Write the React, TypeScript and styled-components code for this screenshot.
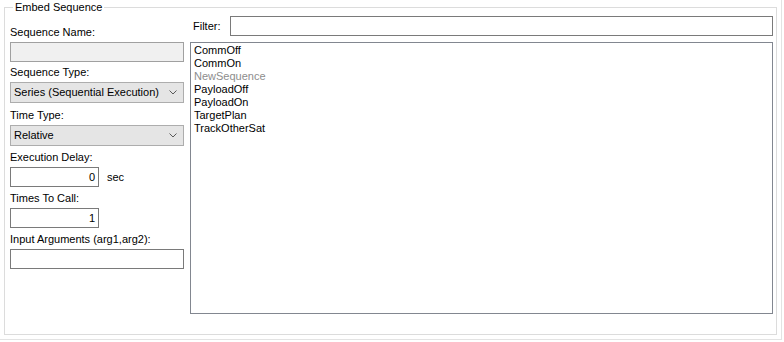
import React from 'react';
import styled, { createGlobalStyle } from 'styled-components';

const GlobalStyle = createGlobalStyle`
  html, body {
    margin: 0;
    padding: 0;
    background: #ffffff;
  }
  body {
    font-family: "Liberation Sans", Arial, sans-serif;
    font-size: 11px;
    color: #000000;
  }
`;

const Panel = styled.div`
  box-sizing: border-box;
  width: 782px;
  height: 340px;
  border-right: 1px solid #e3e3e3;
  border-bottom: 1px solid #e3e3e3;
  display: flex;
`;

const GroupBox = styled.section`
  position: relative;
  box-sizing: border-box;
  flex: 1;
  margin: 7px 4px 4px 4px;
  border: 1px solid #dcdcdc;
  padding: 8px 3px 20px 5px;
  display: grid;
  grid-template-columns: 174px 1fr;
  column-gap: 6px;
`;

const Caption = styled.span`
  position: absolute;
  top: -7px;
  left: 8px;
  padding: 0 2px 0 2px;
  background: #ffffff;
  line-height: 13px;
  color: #000000;
`;

const LeftColumn = styled.div`
  display: flex;
  flex-direction: column;
  padding-top: 10px;
`;

const Field = styled.div<{ $gap: number }>`
  display: flex;
  flex-direction: column;
  margin-bottom: ${p => p.$gap}px;
`;

const Label = styled.label`
  display: block;
  height: 13px;
  line-height: 13px;
  margin-bottom: 3px;
  white-space: nowrap;
`;

const TextBox = styled.div<{ $width?: number; $disabled?: boolean; $right?: boolean }>`
  box-sizing: border-box;
  width: ${p => (p.$width ? `${p.$width}px` : '100%')};
  flex-shrink: 0;
  height: 20px;
  border: 1px solid ${p => (p.$disabled ? '#a0a0a0' : '#7a7a7a')};
  background: ${p => (p.$disabled ? '#f0f0f0' : '#ffffff')};
  padding: 0 3px;
  display: flex;
  align-items: center;
  justify-content: ${p => (p.$right ? 'flex-end' : 'flex-start')};
  line-height: 13px;
`;

const ComboBox = styled.div`
  box-sizing: border-box;
  width: 100%;
  height: 21px;
  border: 1px solid #adadad;
  background: #e5e5e5;
  padding: 0 6px 0 3px;
  display: flex;
  align-items: center;
  justify-content: space-between;
  line-height: 13px;
`;

const Chevron = styled.svg`
  width: 8px;
  height: 5px;
  flex-shrink: 0;
`;

const InlineRow = styled.div`
  display: flex;
  align-items: center;
  gap: 8px;
`;

const RightColumn = styled.div`
  display: flex;
  flex-direction: column;
  gap: 6px;
  min-height: 0;
`;

const FilterRow = styled.div`
  display: flex;
  align-items: center;
  height: 20px;
`;

const FilterLabel = styled.span`
  flex: 0 0 37px;
  margin-left: 3px;
  line-height: 13px;
`;

const FilterBox = styled(TextBox)`
  flex: 1;
  width: auto;
`;

const ListBox = styled.ul`
  box-sizing: border-box;
  flex: 1;
  margin: 0;
  padding: 1px 3px;
  list-style: none;
  border: 1px solid #828790;
  background: #ffffff;
  overflow: hidden;
`;

const ListItem = styled.li<{ $muted?: boolean }>`
  height: 13px;
  line-height: 13px;
  white-space: nowrap;
  color: ${p => (p.$muted ? '#8d8d8d' : '#000000')};
`;

const sequences = [
  { name: 'CommOff' },
  { name: 'CommOn' },
  { name: 'NewSequence', muted: true },
  { name: 'PayloadOff' },
  { name: 'PayloadOn' },
  { name: 'TargetPlan' },
  { name: 'TrackOtherSat' },
];

const DropArrow = () => (
  <Chevron viewBox="0 0 8 5">
    <polyline points="0.5,0.5 4,4 7.5,0.5" fill="none" stroke="#5a5a5a" strokeWidth="1" />
  </Chevron>
);

const App: React.FC = () => {
  return (
    <>
      <GlobalStyle />
      <Panel>
        <GroupBox>
          <Caption>Embed Sequence</Caption>

          <LeftColumn>
            <Field $gap={4}>
              <Label>Sequence Name:</Label>
              <TextBox $disabled />
            </Field>
            <Field $gap={6}>
              <Label>Sequence Type:</Label>
              <ComboBox>
                <span>Series (Sequential Execution)</span>
                <DropArrow />
              </ComboBox>
            </Field>
            <Field $gap={5}>
              <Label>Time Type:</Label>
              <ComboBox>
                <span>Relative</span>
                <DropArrow />
              </ComboBox>
            </Field>
            <Field $gap={5}>
              <Label>Execution Delay:</Label>
              <InlineRow>
                <TextBox $width={89} $right>0</TextBox>
                <span>sec</span>
              </InlineRow>
            </Field>
            <Field $gap={5}>
              <Label>Times To Call:</Label>
              <TextBox $width={89} $right>1</TextBox>
            </Field>
            <Field $gap={0}>
              <Label>Input Arguments (arg1,arg2):</Label>
              <TextBox />
            </Field>
          </LeftColumn>

          <RightColumn>
            <FilterRow>
              <FilterLabel>Filter:</FilterLabel>
              <FilterBox />
            </FilterRow>
            <ListBox>
              {sequences.map(s => (
                <ListItem key={s.name} $muted={s.muted}>{s.name}</ListItem>
              ))}
            </ListBox>
          </RightColumn>
        </GroupBox>
      </Panel>
    </>
  );
};

export default App;
